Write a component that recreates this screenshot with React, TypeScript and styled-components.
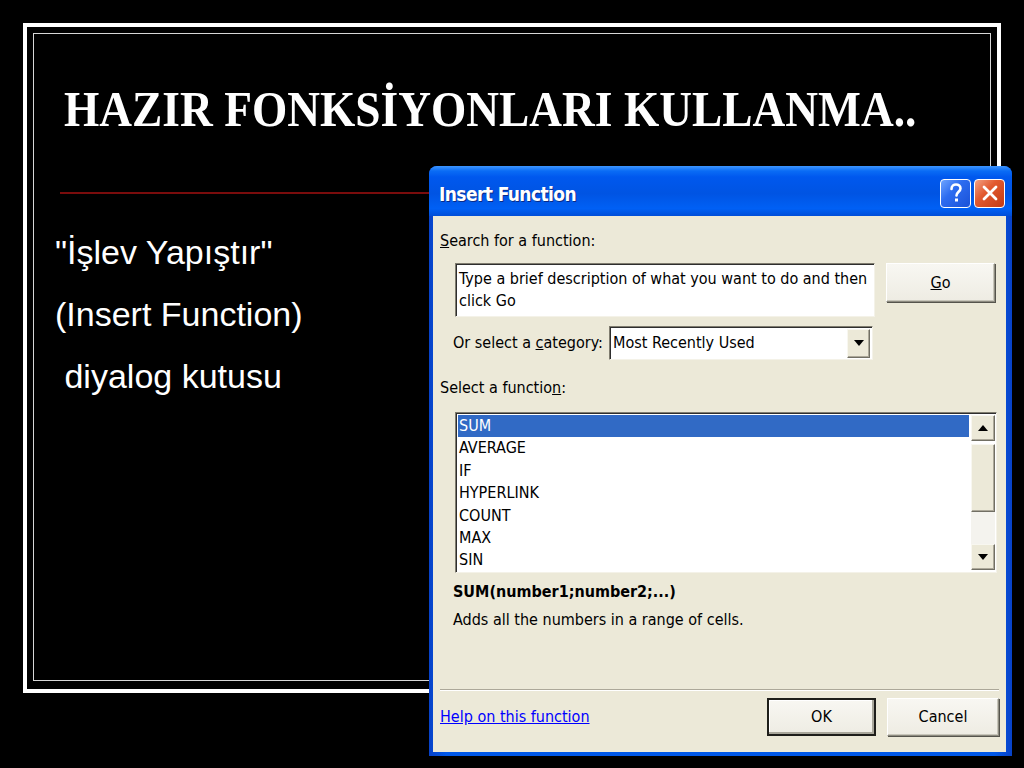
import styled, { createGlobalStyle } from 'styled-components';

const GlobalStyle = createGlobalStyle`
  html, body {
    margin: 0;
    padding: 0;
    background: #000;
  }
  body {
    width: 1024px;
    height: 768px;
    overflow: hidden;
  }
`;

const UI_FONT = `"DejaVu Sans Condensed", "Liberation Sans", sans-serif`;

const FUNCTIONS = ['SUM', 'AVERAGE', 'IF', 'HYPERLINK', 'COUNT', 'MAX', 'SIN'];

const HelpIcon = () => (
  <svg width="14" height="20" viewBox="0 0 14 20">
    <path d="M2.5 6 C2.5 2.5 5 1.5 7 1.5 C9.5 1.5 11.5 3 11.5 5.5 C11.5 8.5 7.5 9 7.5 12.5" fill="none" stroke="#fff" strokeWidth="2.6" strokeLinecap="round" />
    <rect x="6" y="15.5" width="3" height="3" fill="#fff" />
  </svg>
);

const CloseIcon = () => (
  <svg width="16" height="16" viewBox="0 0 16 16">
    <path d="M2 2 L14 14 M14 2 L2 14" stroke="#fff" strokeWidth="2.8" strokeLinecap="round" />
  </svg>
);

const Arrow = ({ up }: { up?: boolean }) => (
  <svg width="10" height="6" viewBox="0 0 10 6">
    <polygon points={up ? '0,6 10,6 5,0' : '0,0 10,0 5,6'} fill="#000" />
  </svg>
);

const InsertFunctionDialog = () => (
  <Dialog>
    <TitleBar>
      <TitleText>Insert Function</TitleText>
      <CaptionButton $kind="help"><HelpIcon /></CaptionButton>
      <CaptionButton $kind="close"><CloseIcon /></CaptionButton>
    </TitleBar>
    <DialogBody>
      <SectionLabel $top={15}><u>S</u>earch for a function:</SectionLabel>
      <SearchRow>
        <SearchBox>Type a brief description of what you want to do and then click Go</SearchBox>
        <DialogButton $width={109} $height={39}><u>G</u>o</DialogButton>
      </SearchRow>
      <CategoryRow>
        <CategoryLabel>Or select a <u>c</u>ategory:</CategoryLabel>
        <Select>
          <SelectValue>Most Recently Used</SelectValue>
          <DropButton><Arrow /></DropButton>
        </Select>
      </CategoryRow>
      <SectionLabel $top={18}>Select a functio<u>n</u>:</SectionLabel>
      <FunctionList>
        <Items>
          {FUNCTIONS.map((name, i) => (
            <Item key={name} $selected={i === 0}>{name}</Item>
          ))}
        </Items>
        <ScrollBar>
          <ScrollButton><Arrow up /></ScrollButton>
          <Thumb />
          <Track />
          <ScrollButton><Arrow /></ScrollButton>
        </ScrollBar>
      </FunctionList>
      <Signature>SUM(number1;number2;...)</Signature>
      <Description>Adds all the numbers in a range of cells.</Description>
      <Separator />
      <Footer>
        <HelpLink>Help on this function</HelpLink>
        <DialogButton $width={109} $height={38} $primary>OK</DialogButton>
        <DialogButton $width={112} $height={38}>Cancel</DialogButton>
      </Footer>
    </DialogBody>
  </Dialog>
);

export default function App() {
  return (
    <>
      <GlobalStyle />
      <Slide>
        <OuterFrame>
          <InnerFrame>
            <Heading>HAZIR FONKSİYONLARI KULLANMA..</Heading>
            <Rule />
            <BulletText $top={27}>"İşlev Yapıştır"</BulletText>
            <BulletText>(Insert Function)</BulletText>
            <BulletText>{'\u00a0'}diyalog kutusu</BulletText>
          </InnerFrame>
        </OuterFrame>
        <InsertFunctionDialog />
      </Slide>
    </>
  );
}

const Slide = styled.div`
  position: relative;
  width: 1024px;
  height: 768px;
  box-sizing: border-box;
  padding: 23px 23px 75px 23px;
  background: #000;
`;

const OuterFrame = styled.div`
  height: 100%;
  box-sizing: border-box;
  border: 4px solid #fff;
  padding: 6px 6px 8px 6px;
  display: flex;
`;

const InnerFrame = styled.div`
  flex: 1;
  min-width: 0;
  overflow: hidden;
  border: 1px solid #d6d6d6;
  display: flex;
  flex-direction: column;
  align-items: flex-start;
`;

const Heading = styled.h1`
  margin: 50px 0 0 30px;
  font: bold 51px/51px "Liberation Serif", serif;
  color: #fff;
  white-space: nowrap;
  transform: scaleX(0.89);
  transform-origin: left center;
`;

const Rule = styled.div`
  margin: 57px 0 0 26px;
  width: 900px;
  height: 2px;
  background: #7a0c0c;
`;

const BulletText = styled.p<{ $top?: number }>`
  margin: ${p => p.$top ?? 0}px 0 0 21px;
  font: 34px/62px "Liberation Sans", Arial, sans-serif;
  color: #fff;
  white-space: pre;
`;

/* ---------- dialog (floats over the slide like a window) ---------- */

const Dialog = styled.div`
  position: absolute;
  left: 429px;
  top: 166px;
  width: 583px;
  height: 590px;
  display: flex;
  flex-direction: column;
  background: linear-gradient(to right, #0842c8, #0058e8 3%, #0058e8 97%, #0842c8);
  border-radius: 8px 8px 0 0;
  font: 16px/20px ${UI_FONT};
  color: #000;
`;

const TitleBar = styled.div`
  height: 50px;
  display: flex;
  align-items: center;
  padding: 0 7px 0 10px;
  border-radius: 8px 8px 0 0;
  background: linear-gradient(
    to bottom,
    #3d95ff 0%,
    #0a6cf5 10%,
    #0058ee 22%,
    #0054e3 55%,
    #0060f5 85%,
    #004ed8 100%
  );
`;

const TitleText = styled.div`
  flex: 1;
  padding-top: 6px;
  font: bold 19px/24px ${UI_FONT};
  letter-spacing: -0.6px;
  color: #fff;
  text-shadow: 1px 1px 0 #0a2a86;
`;

const CaptionButton = styled.div<{ $kind: 'help' | 'close' }>`
  width: 31px;
  height: 29px;
  margin-left: 3px;
  margin-top: 4px;
  box-sizing: border-box;
  border: 1px solid #fff;
  border-radius: 4px;
  display: flex;
  align-items: center;
  justify-content: center;
  background: ${p =>
    p.$kind === 'help'
      ? 'linear-gradient(135deg, #6fa4ff 0%, #2d6cf0 40%, #1a52d8 100%)'
      : 'linear-gradient(135deg, #f2a184 0%, #e25a30 40%, #c33a12 100%)'};
`;

const DialogBody = styled.div`
  flex: 1;
  margin: 0 6px 4px 4px;
  padding: 0 7px;
  background: #ece9d8;
  display: flex;
  flex-direction: column;
`;

const SectionLabel = styled.div<{ $top: number }>`
  margin-top: ${p => p.$top}px;
  white-space: nowrap;
`;

const SearchRow = styled.div`
  display: flex;
  align-items: flex-start;
  margin-top: 12px;
  padding-left: 15px;
`;

const sunken = `
  box-sizing: border-box;
  background: #fff;
  border: 1px solid;
  border-color: #7f7c6f #f4f2e8 #f4f2e8 #7f7c6f;
  box-shadow: inset 1px 1px 0 #2e2e2e;
`;

const SearchBox = styled.div`
  ${sunken}
  width: 420px;
  height: 54px;
  padding: 4px 4px 0 3px;
  line-height: 22px;
`;

const DialogButton = styled.div<{ $width: number; $height: number; $primary?: boolean }>`
  width: ${p => p.$width}px;
  height: ${p => p.$height}px;
  box-sizing: border-box;
  margin-left: ${p => (p.$primary ? 0 : 14)}px;
  display: flex;
  align-items: center;
  justify-content: center;
  background: linear-gradient(to bottom, #f8f7f2, #eeece3);
  border: ${p => (p.$primary ? 2 : 1)}px solid;
  border-color: ${p => (p.$primary ? '#1e1e1a' : '#ffffff #8d8b80 #8d8b80 #ffffff')};
  box-shadow: ${p =>
    p.$primary ? 'inset -2px -2px 0 #a9a79b, inset 1px 1px 0 #fff' : '1px 1px 0 #55544c, inset -1px -1px 0 #c8c6ba'};
  &:last-child {
    margin-left: ${p => (p.$primary ? 0 : 11)}px;
  }
`;

const CategoryRow = styled.div`
  display: flex;
  align-items: center;
  margin-top: 9px;
  padding-left: 13px;
`;

const CategoryLabel = styled.div`
  width: 156px;
  white-space: nowrap;
`;

const Select = styled.div`
  ${sunken}
  width: 264px;
  height: 34px;
  display: flex;
  align-items: center;
  padding: 2px 2px 2px 3px;
`;

const SelectValue = styled.div`
  flex: 1;
`;

const bevel = `
  box-sizing: border-box;
  background: #ece9d8;
  border: 1px solid;
  border-color: #f8f7f0 #716f64 #716f64 #f8f7f0;
  box-shadow: inset -1px -1px 0 #aca899;
`;

const DropButton = styled.div`
  ${bevel}
  width: 23px;
  height: 29px;
  display: flex;
  align-items: center;
  justify-content: center;
`;

const FunctionList = styled.div`
  ${sunken}
  margin: 14px 0 0 15px;
  width: 542px;
  height: 161px;
  padding: 2px 1px 2px 2px;
  display: flex;
`;

const Items = styled.div`
  flex: 1;
  display: flex;
  flex-direction: column;
  padding-right: 2px;
`;

const Item = styled.div<{ $selected?: boolean }>`
  height: 22.4px;
  line-height: 22.4px;
  padding-left: 1px;
  background: ${p => (p.$selected ? '#316ac5' : 'transparent')};
  color: ${p => (p.$selected ? '#fff' : '#000')};
`;

const ScrollBar = styled.div`
  width: 24px;
  display: flex;
  flex-direction: column;
`;

const ScrollButton = styled.div`
  ${bevel}
  height: 26px;
  display: flex;
  align-items: center;
  justify-content: center;
`;

const Thumb = styled.div`
  ${bevel}
  height: 68px;
  margin-top: 3px;
`;

const Track = styled.div`
  flex: 1;
  background: #f4f3ee;
`;

const Signature = styled.div`
  margin: 9px 0 0 13px;
  font-weight: bold;
`;

const Description = styled.div`
  margin: 8px 0 0 13px;
`;

const Separator = styled.div`
  margin-top: 59px;
  border-top: 1px solid #aca899;
  border-bottom: 1px solid #fff;
`;

const Footer = styled.div`
  margin-top: 7px;
  display: flex;
  align-items: center;
`;

const HelpLink = styled.div`
  flex: 1;
  color: #0000ff;
  text-decoration: underline;
`;
